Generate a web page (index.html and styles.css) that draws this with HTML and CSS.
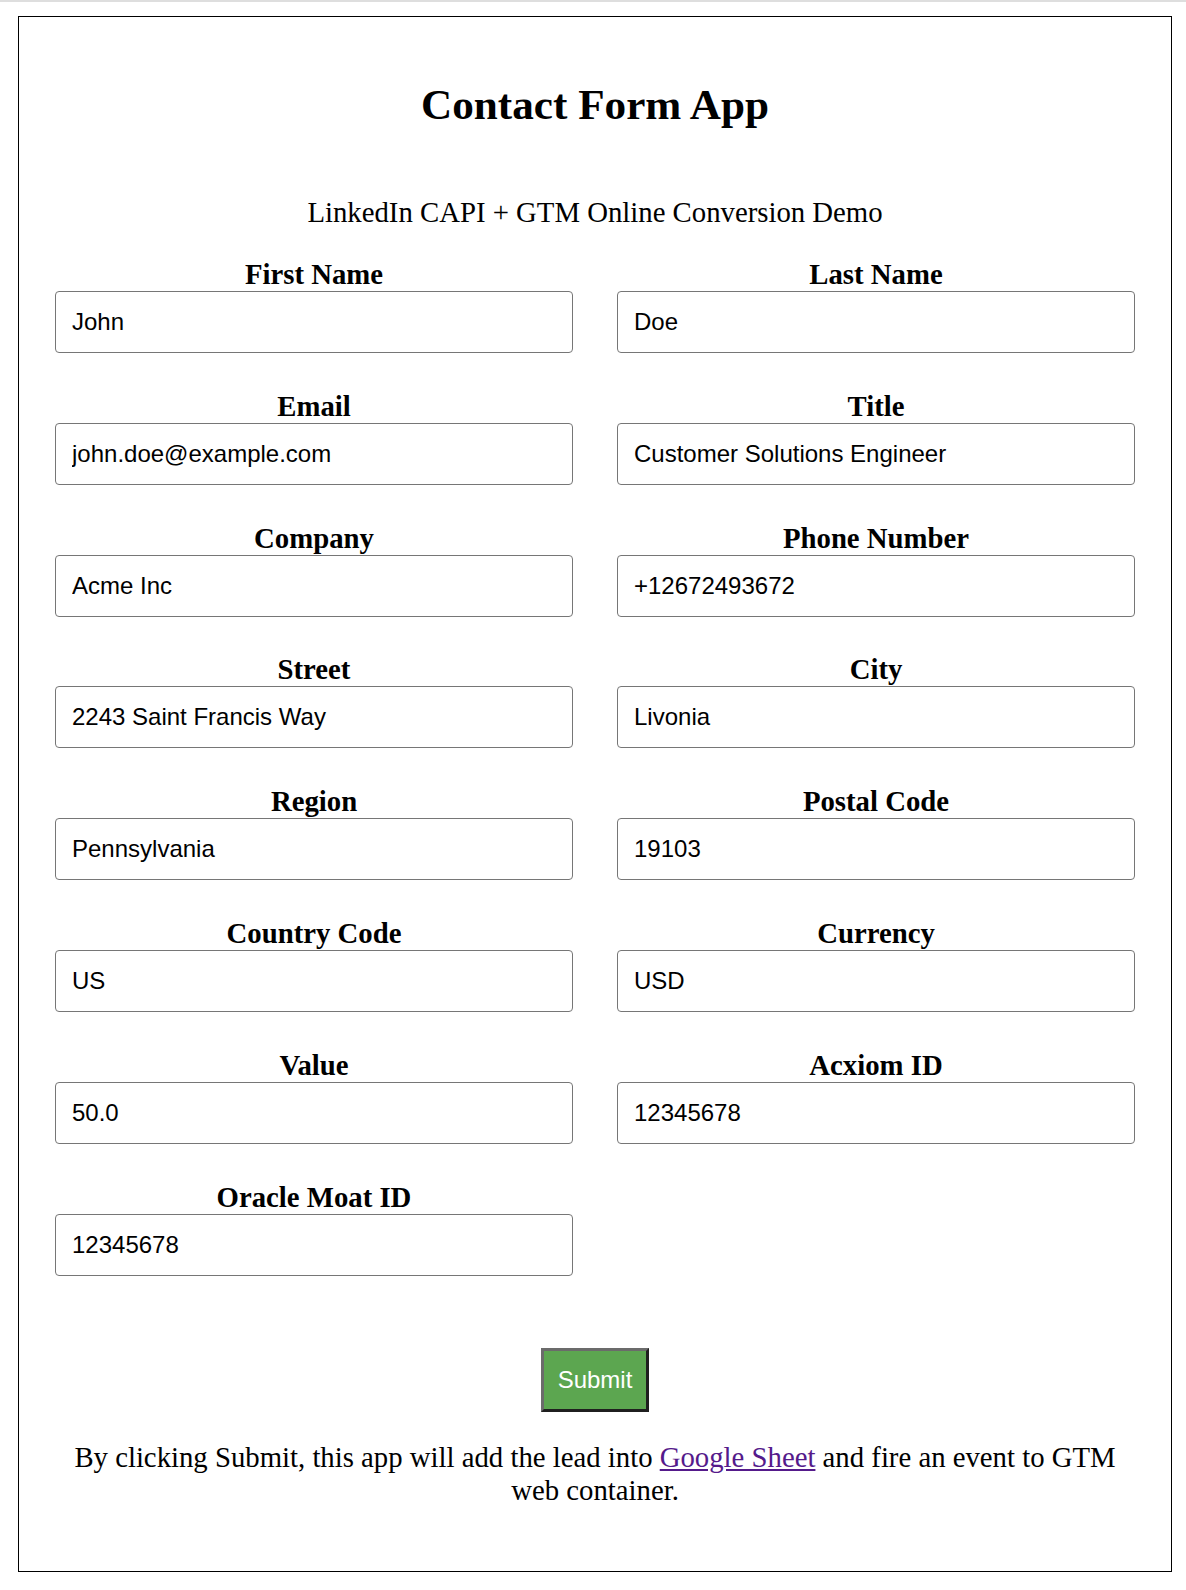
FILE: index.html
```html
<!DOCTYPE html>
<html lang="en">
<head>
<meta charset="utf-8">
<title>Contact Form App</title>
<link rel="stylesheet" href="styles.css">
</head>
<body>
<div class="topline"></div>
<div class="card">
  <h2 class="title">Contact Form App</h2>
  <p class="subtitle">LinkedIn CAPI + GTM Online Conversion Demo</p>
  <form class="grid">
    <div class="field"><label>First Name</label><input type="text" value="John"></div>
    <div class="field"><label>Last Name</label><input type="text" value="Doe"></div>
    <div class="field"><label>Email</label><input type="text" value="john.doe@example.com"></div>
    <div class="field"><label>Title</label><input type="text" value="Customer Solutions Engineer"></div>
    <div class="field"><label>Company</label><input type="text" value="Acme Inc"></div>
    <div class="field"><label>Phone Number</label><input type="text" value="+12672493672"></div>
    <div class="field"><label>Street</label><input type="text" value="2243 Saint Francis Way"></div>
    <div class="field"><label>City</label><input type="text" value="Livonia"></div>
    <div class="field"><label>Region</label><input type="text" value="Pennsylvania"></div>
    <div class="field"><label>Postal Code</label><input type="text" value="19103"></div>
    <div class="field"><label>Country Code</label><input type="text" value="US"></div>
    <div class="field"><label>Currency</label><input type="text" value="USD"></div>
    <div class="field"><label>Value</label><input type="text" value="50.0"></div>
    <div class="field"><label>Acxiom ID</label><input type="text" value="12345678"></div>
    <div class="field"><label>Oracle Moat ID</label><input type="text" value="12345678"></div>
  </form>
  <div class="actions"><button type="button" class="submit">Submit</button></div>
  <p class="note">By clicking Submit, this app will add the lead into <a href="#" class="link">Google Sheet</a> and fire an event to GTM web container.</p>
</div>
</body>
</html>
```
FILE: styles.css
```css
html, body {
  margin: 0;
  padding: 0;
  background: #fff;
}
body {
  font-family: "Liberation Serif", "Times New Roman", serif;
  font-size: 28.75px;
  color: #000;
}
.topline {
  height: 2px;
  background: #dedede;
}
.card {
  box-sizing: border-box;
  width: 1154px;
  margin: 14px 0 0 18px;
  border: 1px solid #000;
  padding: 63px 36px 65px 36px;
  height: 1556px;
}
.title {
  margin: 0;
  font-size: 43.2px;
  line-height: 49px;
  font-weight: bold;
  text-align: center;
}
.subtitle {
  margin: 67px 0 0 0;
  line-height: 33px;
  text-align: center;
}
.grid {
  margin-top: 29px;
  display: grid;
  grid-template-columns: 1fr 1fr;
  column-gap: 44px;
  row-gap: 36.8px;
}
.field label {
  display: block;
  text-align: center;
  font-weight: bold;
  line-height: 33px;
}
.field input {
  display: block;
  box-sizing: border-box;
  width: 100%;
  height: 62px;
  margin: 0;
  border: 1px solid #767676;
  border-radius: 4px;
  padding: 0 16px;
  font-family: "Liberation Sans", Arial, sans-serif;
  font-size: 24px;
  color: #000;
  background: #fff;
}
.actions {
  margin-top: 72px;
  display: flex;
  justify-content: center;
}
.submit {
  box-sizing: border-box;
  height: 64px;
  padding: 0 14px;
  border-width: 3px;
  border-style: solid;
  border-color: #6b6b6b #1f1f1f #1f1f1f #6b6b6b;
  background: #5ca650;
  color: #fff;
  font-family: "Liberation Sans", Arial, sans-serif;
  font-size: 24px;
  cursor: pointer;
}
.note {
  margin: 29px 0 0 0;
  line-height: 33px;
  text-align: center;
}
.link {
  color: #551a8b;
  text-decoration: underline;
}
```
